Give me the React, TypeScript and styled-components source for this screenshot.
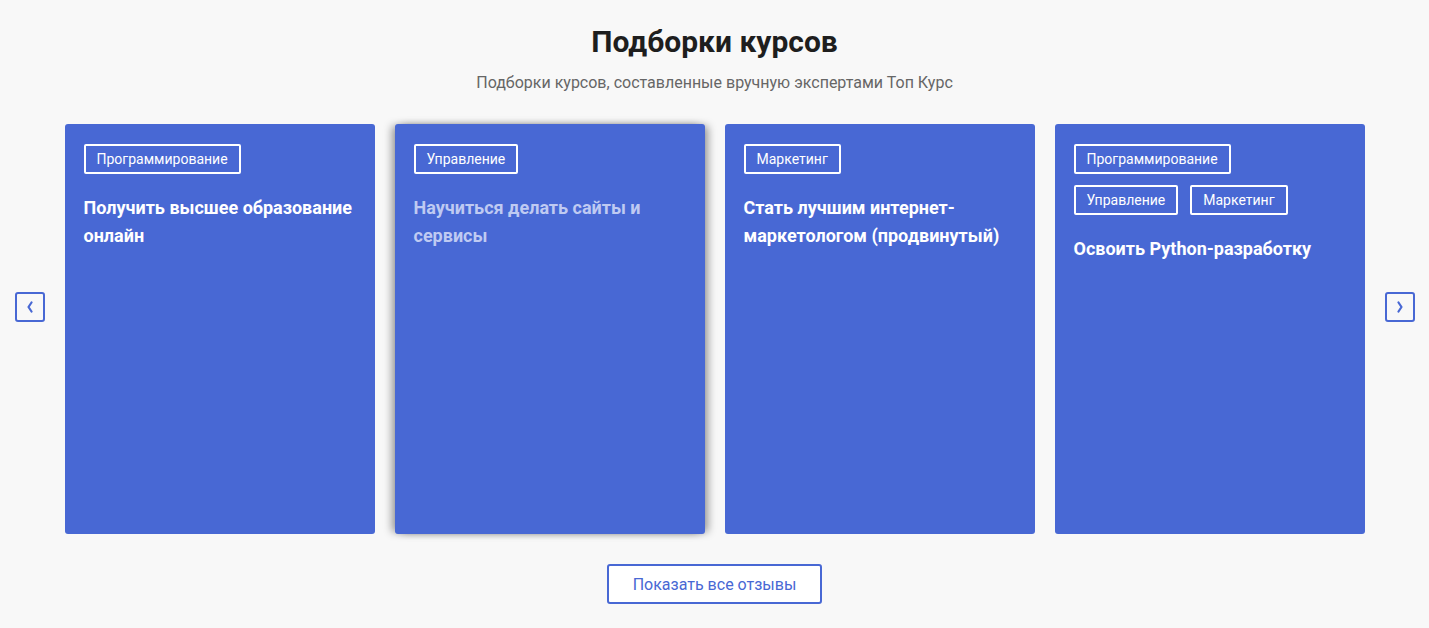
import React from 'react';
import styled, { createGlobalStyle } from 'styled-components';

type Collection = {
    id: number;
    tags: string[];
    title: string;
    active?: boolean;
};

const collections: Collection[] = [
    { id: 1, tags: ['Программирование'], title: 'Получить высшее образование онлайн' },
    { id: 2, tags: ['Управление'], title: 'Научиться делать сайты и сервисы', active: true },
    { id: 3, tags: ['Маркетинг'], title: 'Стать лучшим интернет-маркетологом (продвинутый)' },
    { id: 4, tags: ['Программирование', 'Управление', 'Маркетинг'], title: 'Освоить Python-разработку' },
];

const BLUE = '#4868d4';

function Chevron({ dir }: { dir: 'left' | 'right' }) {
    return (
        <svg width="8" height="12" viewBox="0 0 8 12" fill="none">
            <polyline
                points={dir === 'left' ? '5.5,1.5 2.5,6 5.5,10.5' : '2.5,1.5 5.5,6 2.5,10.5'}
                stroke={BLUE}
                strokeWidth="2.2"
                strokeLinecap="round"
                strokeLinejoin="round"
            />
        </svg>
    );
}

function App() {
    return (
        <>
            <GlobalStyle />
            <StSection>
                <StTitle>Подборки курсов</StTitle>
                <StSubtitle>Подборки курсов, составленные вручную экспертами Топ Курс</StSubtitle>

                <StSlider>
                    <StArrow aria-label="Назад">
                        <Chevron dir="left" />
                    </StArrow>
                    <StTrack>
                        {collections.map((item) => (
                            <StCard key={item.id} $active={item.active}>
                                <StTags>
                                    {item.tags.map((tag) => (
                                        <StTag key={tag}>{tag}</StTag>
                                    ))}
                                </StTags>
                                <StCardTitle $active={item.active}>{item.title}</StCardTitle>
                            </StCard>
                        ))}
                    </StTrack>
                    <StArrow aria-label="Вперёд">
                        <Chevron dir="right" />
                    </StArrow>
                </StSlider>

                <StMoreButton>Показать все отзывы</StMoreButton>
            </StSection>
        </>
    );
}

const GlobalStyle = createGlobalStyle`
    body {
        margin: 0;
        background: #f8f8f8;
        font-family: Roboto, 'Noto Sans', sans-serif;
    }
`;

const StSection = styled.section`
    display: flex;
    flex-direction: column;
    align-items: center;
    padding: 24px 0 24px;
`;

const StTitle = styled.h2`
    margin: 0;
    font-size: 30px;
    line-height: 36px;
    font-weight: 700;
    color: #1e1e1e;
`;

const StSubtitle = styled.p`
    margin: 13px 0 0;
    font-size: 16px;
    line-height: 20px;
    color: #666;
`;

const StSlider = styled.div`
    display: flex;
    align-items: flex-start;
    gap: 20px;
    margin-top: 31px;
`;

const StTrack = styled.div`
    display: flex;
    gap: 20px;
`;

const StArrow = styled.button`
    margin-top: 168px;
    width: 30px;
    height: 30px;
    padding: 0;
    border: 2px solid ${BLUE};
    border-radius: 3px;
    background: transparent;
    display: flex;
    align-items: center;
    justify-content: center;
    cursor: pointer;
`;

const StCard = styled.div<{ $active?: boolean }>`
    box-sizing: border-box;
    width: 310px;
    height: 410px;
    padding: 20px 19px;
    border-radius: 3px;
    background-color: ${BLUE};
    box-shadow: ${({ $active }) =>
        $active
            ? '-5px 0 8px -2px rgba(0, 0, 0, 0.4), 5px 0 8px -2px rgba(0, 0, 0, 0.4)'
            : 'none'};
`;

const StTags = styled.div`
    display: flex;
    flex-wrap: wrap;
    gap: 11px 12px;
`;

const StTag = styled.span`
    box-sizing: border-box;
    height: 30px;
    padding: 0 11px;
    border: 2px solid #fff;
    border-radius: 2px;
    color: #fff;
    font-size: 14px;
    line-height: 26px;
`;

const StCardTitle = styled.h3<{ $active?: boolean }>`
    margin: 20px 0 0;
    font-size: 18px;
    line-height: 28px;
    font-weight: 700;
    color: ${({ $active }) => ($active ? '#bfcaf2' : '#fff')};
`;

const StMoreButton = styled.button`
    margin-top: 30px;
    width: 215px;
    height: 40px;
    border: 2px solid ${BLUE};
    border-radius: 3px;
    background: #fff;
    color: ${BLUE};
    font-family: Roboto, sans-serif;
    font-size: 16px;
    cursor: pointer;
`;

export default App;
